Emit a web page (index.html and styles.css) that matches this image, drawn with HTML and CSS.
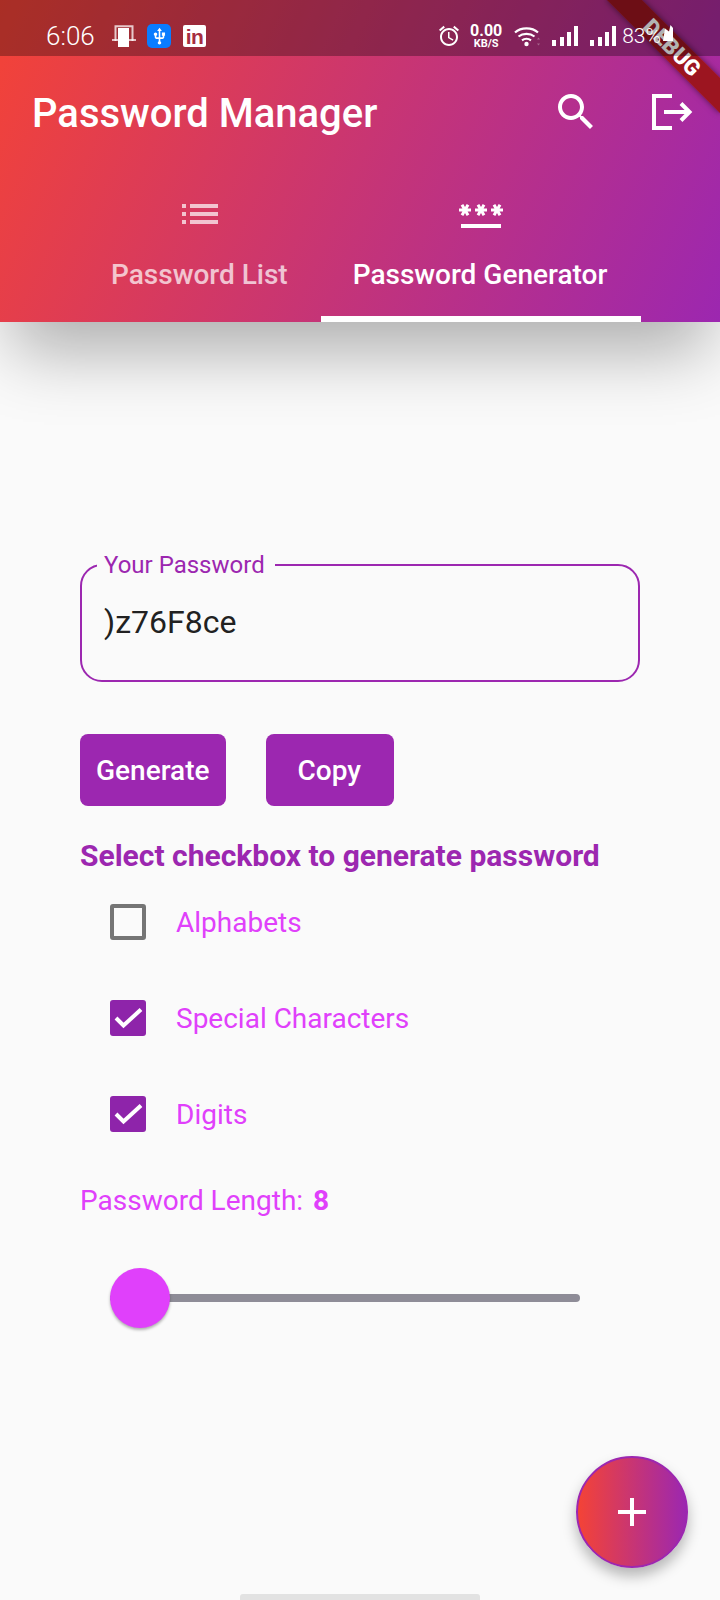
FILE: index.html
```html
<!DOCTYPE html>
<html lang="en">
<head>
    <meta charset="UTF-8">
    <meta name="viewport" content="width=device-width, initial-scale=1.0">
    <title>Password Manager</title>
    <link rel="stylesheet" href="styles.css">
</head>
<body>
    <header class="app-header">
        <div class="status-bar">
            <div class="status-left">
                <span class="status-time">6:06</span>
                <svg class="icon-cast" viewBox="0 0 24 22" width="24" height="22">
                    <path d="M3.500 16V1.200H20.500V16" fill="none" stroke="#fff" stroke-opacity=".75" stroke-width="2"/>
                    <rect x="0" y="14" width="24" height="2" fill="#fff" fill-opacity=".7"/>
                    <rect x="6" y="3" width="11" height="19" fill="#fff"/>
                </svg>
                <span class="icon-usb">
                    <svg viewBox="0 0 24 24" width="19" height="19"><path fill="#fff" d="M15 7v4h1v2h-3V5h2l-3-4-3 4h2v8H8v-2.070c.7-.37 1.200-1.080 1.200-1.930 0-1.210-.99-2.200-2.200-2.200-1.210 0-2.200.99-2.200 2.200 0 .85.5 1.560 1.200 1.930V13c0 1.110.89 2 2 2h3v3.050c-.71.37-1.200 1.100-1.200 1.950 0 1.220.99 2.200 2.200 2.200 1.210 0 2.200-.98 2.200-2.200 0-.85-.49-1.580-1.200-1.950V15h3c1.110 0 2-.89 2-2v-2h1V7h-4z"/></svg>
                </span>
                <span class="icon-linkedin">in</span>
            </div>
            <div class="status-right">
                <svg class="icon-alarm" viewBox="0 0 24 24" width="24" height="24"><path fill="#fff" d="M22 5.720l-4.600-3.860-1.290 1.530 4.600 3.860L22 5.720zM7.880 3.390L6.600 1.860 2 5.710l1.290 1.530 4.590-3.850zM12.500 8H11v6l4.750 2.850.75-1.230-4-2.370V8zM12 4c-4.970 0-9 4.030-9 9s4.030 9 9 9 9-4.030 9-9-4.030-9-9-9zm0 16c-3.870 0-7-3.130-7-7s3.130-7 7-7 7 3.130 7 7-3.130 7-7 7z"/></svg>
                <div class="net-speed">
                    <span class="net-value">0.00</span>
                    <span class="net-unit">KB/S</span>
                </div>
                <svg class="icon-wifi" viewBox="0 0 26 21" width="26" height="21">
                    <path d="M1 6.500C7 1 18 1 24 6.500" fill="none" stroke="#fff" stroke-width="2.200"/>
                    <path d="M4.500 10.500C9 7 16 7 20.500 10.500" fill="none" stroke="#fff" stroke-width="2.200"/>
                    <path d="M8 14.300C10.500 12.500 14.500 12.500 17 14.300" fill="none" stroke="#fff" stroke-width="2.200"/>
                    <circle cx="12.500" cy="18" r="2.200" fill="#fff"/>
                    <path d="M23 13.500l1.500-2 1.500 2zM23 17.500l1.500 2 1.500-2z" fill="#fff" fill-opacity=".3"/>
                </svg>
                <div class="signal">
                    <i class="bar-1"></i><i class="bar-2"></i><i class="bar-3"></i><i class="bar-4"></i>
                </div>
                <div class="signal">
                    <i class="bar-1"></i><i class="bar-2"></i><i class="bar-3"></i><i class="bar-4"></i>
                </div>
                <span class="battery">83%</span>
                <svg class="icon-bolt" viewBox="0 0 10 16" width="10" height="16"><path fill="#fff" d="M7.500 0L6 6.500 2 3.500 0 16H10V3z"/></svg>
            </div>
        </div>

        <div class="toolbar">
            <h1 class="app-title">Password Manager</h1>
            <div class="toolbar-actions">
                <svg viewBox="0 0 24 24" width="48" height="48"><path fill="#fff" d="M15.500 14h-.79l-.28-.27C15.410 12.590 16 11.110 16 9.500 16 5.910 13.090 3 9.500 3S3 5.910 3 9.500 5.910 16 9.500 16c1.610 0 3.090-.59 4.230-1.570l.27.28v.79l5 4.990L20.490 19l-4.990-5zm-6 0C7.010 14 5 11.990 5 9.500S7.010 5 9.500 5 14 7.010 14 9.500 11.990 14 9.500 14z"/></svg>
                <svg viewBox="0 0 48 48" width="48" height="48" fill="none" stroke="#fff" stroke-width="4">
                    <path d="M24 8H6V40H24"/>
                    <path d="M16 24H41M33 15.500L41.500 24L33 32.500"/>
                </svg>
            </div>
        </div>

        <nav class="tabs">
            <div class="tab tab-first">
                <svg class="tab-icon" viewBox="0 0 24 24" width="48" height="48"><path fill="#fff" d="M3 13h2v-2H3v2zm0 4h2v-2H3v2zm0-8h2V7H3v2zm4 4h14v-2H7v2zm0 4h14v-2H7v2zM7 7v2h14V7H7z"/></svg>
                <span class="tab-label">Password List</span>
            </div>
            <div class="tab tab-active">
                <svg class="tab-icon" viewBox="0 0 24 24" width="48" height="48"><path fill="#fff" d="M2,17h20v2H2V17z M3.150,12.950L4,11.470l0.850,1.480l1.300-0.750L5.300,10.720H7v-1.500H5.300l0.850-1.470L4.850,7L4,8.470L3.150,7l-1.300,0.750 L2.700,9.220H1v1.500h1.700L1.850,12.200L3.150,12.950z M9.850,12.200l1.300,0.750L12,11.470l0.850,1.480l1.300-0.750l-0.850-1.480H15v-1.500h-1.700l0.850-1.470 L12.850,7L12,8.470L11.150,7l-1.300,0.750l0.850,1.470H9v1.500h1.700L9.850,12.200z M23,9.220h-1.700l0.850-1.470L20.850,7L20,8.470L19.150,7l-1.300,0.750 l0.850,1.470H17v1.500h1.700l-0.850,1.480l1.300,0.750L20,11.470l0.850,1.480l1.300-0.750l-0.850-1.480H23V9.220z"/></svg>
                <span class="tab-label">Password Generator</span>
            </div>
        </nav>

        <div class="debug-banner">DEBUG</div>
    </header>

    <main class="generator">
        <div class="password-field">
            <label class="password-label">Your Password</label>
            <div class="password-value">)z76F8ce</div>
        </div>

        <div class="button-row">
            <button class="btn btn-generate">Generate</button>
            <button class="btn btn-copy">Copy</button>
        </div>

        <h2 class="section-title">Select checkbox to generate password</h2>

        <div class="check-row">
            <span class="check-box"></span>
            <span class="check-label">Alphabets</span>
        </div>
        <div class="check-row">
            <span class="check-box checked">
                <svg viewBox="0 0 36 36" width="36" height="36"><path d="M6 18L13.500 25.500L31 9.500" fill="none" stroke="#fff" stroke-width="4"/></svg>
            </span>
            <span class="check-label">Special Characters</span>
        </div>
        <div class="check-row">
            <span class="check-box checked">
                <svg viewBox="0 0 36 36" width="36" height="36"><path d="M6 18L13.500 25.500L31 9.500" fill="none" stroke="#fff" stroke-width="4"/></svg>
            </span>
            <span class="check-label">Digits</span>
        </div>

        <p class="length-text">Password Length: <b class="length-value">8</b></p>

        <div class="slider">
            <div class="slider-track"></div>
            <div class="slider-thumb"></div>
        </div>
    </main>

    <button class="fab">
        <svg viewBox="0 0 28 28" width="28" height="28"><path fill="#fff" d="M12 0h4v12h12v4H16v12h-4V16H0v-4h12z"/></svg>
    </button>
    <div class="home-bar"></div>
</body>
</html>
```

FILE: styles.css
```css
* {
    box-sizing: border-box;
}
html, body {
    margin: 0;
    padding: 0;
}
body {
    position: relative;
    width: 720px;
    height: 1600px;
    overflow: hidden;
    background-color: #fafafa;
    font-family: Roboto, sans-serif;
}

/* header */
.app-header {
    position: relative;
    z-index: 2;
    height: 322px;
    background: linear-gradient(114.1deg, #f44336, #9c27b0);
    box-shadow: 0 42px 64px -12px rgba(0, 0, 0, 0.3);
    color: white;
}
.status-bar {
    position: relative;
    z-index: 3;
    display: flex;
    justify-content: space-between;
    align-items: center;
    height: 56px;
    padding: 16px 47px 0 46px;
    background-color: rgba(0, 0, 0, 0.3);
}
.status-left, .status-right {
    display: flex;
    align-items: center;
}
.status-time {
    font-size: 26px;
    font-weight: 300;
    line-height: 32px;
    width: 48px;
    white-space: nowrap;
}
.icon-cast {
    margin-left: 18px;
}
.icon-usb {
    display: flex;
    align-items: center;
    justify-content: center;
    width: 24px;
    height: 24px;
    margin-left: 11px;
    border-radius: 5px;
    background-color: #0a7cff;
}
.icon-linkedin {
    width: 23px;
    height: 22px;
    margin-left: 12px;
    border-radius: 2px;
    background-color: white;
    color: #a62d40;
    font-family: "Liberation Sans", sans-serif;
    font-size: 21px;
    font-weight: bold;
    line-height: 24px;
    text-align: center;
    letter-spacing: -0.5px;
}
.icon-alarm {
    margin-left: -2px;
}
.net-speed {
    display: flex;
    flex-direction: column;
    align-items: center;
    width: 32px;
    margin-left: 9px;
    font-weight: 700;
}
.net-value {
    font-size: 16px;
    line-height: 14px;
}
.net-unit {
    font-size: 11px;
    line-height: 11px;
}
.icon-wifi {
    margin-left: 12px;
}
.signal {
    display: flex;
    align-items: flex-end;
    justify-content: space-between;
    width: 26px;
    height: 20px;
    margin-left: 12px;
}
.signal i {
    display: block;
    width: 4px;
    background-color: white;
}
.bar-1 { height: 6px; }
.bar-2 { height: 9px; }
.bar-3 { height: 14px; }
.bar-4 { height: 20px; }
.battery {
    margin-left: 6px;
    font-size: 21px;
    font-weight: 300;
    line-height: 30px;
    white-space: nowrap;
}
.icon-bolt {
    margin-left: 2px;
    margin-top: -7px;
}

.toolbar {
    display: flex;
    align-items: center;
    justify-content: space-between;
    height: 112px;
    padding: 0 24px 0 32px;
}
.app-title {
    margin: 2px 0 0;
    font-size: 40px;
    font-weight: 500;
}
.toolbar-actions {
    display: flex;
    gap: 48px;
}

.tabs {
    display: flex;
    height: 154px;
    padding: 22px 0 0 79px;
}
.tab {
    display: flex;
    flex-direction: column;
    align-items: center;
    padding: 0 34px 0 32px;
    opacity: 0.7;
}
.tab-first {
    padding-right: 33px;
}
.tab-active {
    opacity: 1;
    border-bottom: 6px solid white;
}
.tab-icon {
    margin-left: 2px;
}
.tab-label {
    margin-top: 21px;
    font-size: 28px;
    font-weight: 500;
    line-height: 32px;
    white-space: nowrap;
}

.debug-banner {
    position: absolute;
    top: 35px;
    left: 592px;
    width: 160px;
    height: 25px;
    background-color: rgba(155, 20, 25, 0.95);
    box-shadow: 0 0 6px rgba(0, 0, 0, 0.5);
    transform: rotate(45deg);
    color: white;
    font-size: 22px;
    font-weight: 900;
    line-height: 25px;
    text-align: center;
}

/* form */
.generator {
    padding: 242px 80px 0;
}
.password-field {
    position: relative;
    height: 118px;
    padding: 36px 22px 0;
    border: 2px solid #9c27b0;
    border-radius: 22px;
}
.password-label {
    position: absolute;
    top: -16px;
    left: 15px;
    padding: 0 10px 0 7px;
    background-color: #fafafa;
    color: #9c27b0;
    font-size: 24px;
    line-height: 30px;
}
.password-value {
    color: #212121;
    font-size: 32px;
    line-height: 40px;
}
.button-row {
    display: flex;
    gap: 40px;
    margin-top: 52px;
}
.btn {
    height: 72px;
    border: none;
    border-radius: 8px;
    background-color: #9c27b0;
    color: white;
    font-family: Roboto, sans-serif;
    font-size: 28px;
    font-weight: 500;
}
.btn-generate {
    padding: 0 17px 0 16px;
}
.btn-copy {
    padding: 0 33px 0 31px;
}
.section-title {
    margin: 30px 0 -2px;
    color: #9c27b0;
    font-size: 30px;
    font-weight: 700;
    line-height: 40px;
    white-space: nowrap;
}
.check-row {
    display: flex;
    align-items: center;
    height: 96px;
    padding-left: 30px;
}
.check-box {
    flex: none;
    width: 36px;
    height: 36px;
    border: 4px solid #757575;
    border-radius: 3px;
}
.check-box.checked {
    border: none;
    background-color: #8e24aa;
}
.check-box svg {
    display: block;
}
.check-label {
    margin-left: 30px;
    color: #e040fb;
    font-size: 28px;
}
.length-text {
    margin: 19px 0 0;
    color: #e040fb;
    font-size: 28px;
    line-height: 40px;
}
.length-value {
    margin-left: 3px;
}
.slider {
    position: relative;
    display: flex;
    align-items: center;
    width: 470px;
    height: 60px;
    margin: 47px 0 0 30px;
}
.slider-track {
    width: 100%;
    height: 8px;
    border-radius: 4px;
    background-color: #8e8c97;
}
.slider-thumb {
    position: absolute;
    top: 0;
    left: 0;
    width: 60px;
    height: 60px;
    border-radius: 50%;
    background-color: #e040fb;
    box-shadow: 0 2px 3px rgba(0, 0, 0, 0.3);
}

/* floating */
.fab {
    position: absolute;
    top: 1456px;
    left: 576px;
    display: flex;
    align-items: center;
    justify-content: center;
    width: 112px;
    height: 112px;
    padding: 0;
    border: 2px solid #9c27b0;
    border-radius: 50%;
    background: linear-gradient(90deg, #f44336, #9c27b0);
    box-shadow: 0 8px 14px rgba(0, 0, 0, 0.28);
}
.home-bar {
    position: absolute;
    bottom: 0;
    left: 240px;
    width: 240px;
    height: 6px;
    border-radius: 3px 3px 0 0;
    background-color: #e2e2e2;
}
```
